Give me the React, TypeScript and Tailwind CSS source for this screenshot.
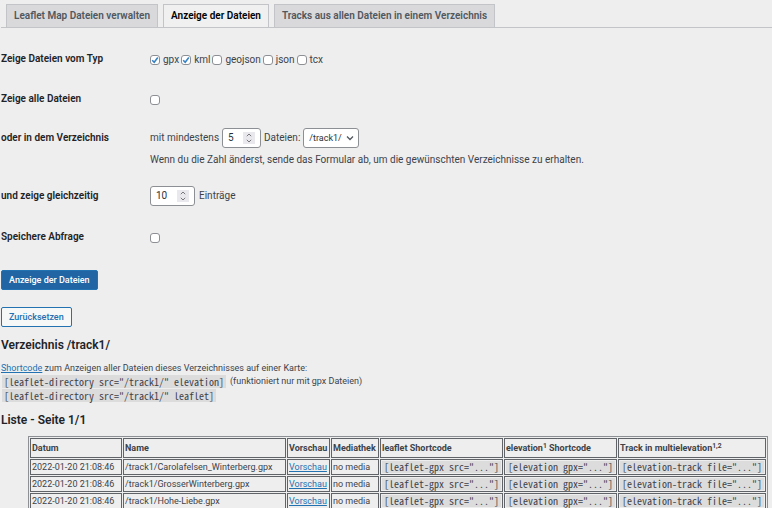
import type { ReactNode } from "react";

const fileTypes = [
  { name: "gpx", checked: true },
  { name: "kml", checked: true },
  { name: "geojson", checked: false },
  { name: "json", checked: false },
  { name: "tcx", checked: false },
];

const files = [
  "/track1/Carolafelsen_Winterberg.gpx",
  "/track1/GrosserWinterberg.gpx",
  "/track1/Hohe-Liebe.gpx",
];

function Checkbox({ id, checked = false }: { id: string; checked?: boolean }) {
  return (
    <span className="grid size-[10px] shrink-0">
      <input
        id={id}
        type="checkbox"
        defaultChecked={checked}
        className="peer col-start-1 row-start-1 size-[10px] appearance-none rounded-[3px] border border-[#8c8f94] bg-white"
      />
      <svg
        viewBox="0 0 10 10"
        className="pointer-events-none invisible col-start-1 row-start-1 size-[10px] peer-checked:visible"
        fill="none"
        stroke="#3582c4"
        strokeWidth="1.6"
        aria-hidden="true"
      >
        <path d="M2.2 5.2 4.2 7.2 7.8 2.6" />
      </svg>
    </span>
  );
}

function NumberBox({ id, value, width }: { id: string; value: number; width: string }) {
  return (
    <span className={`flex h-5 items-center rounded-[3px] border border-[#8c8f94] bg-white px-[5px] ${width}`}>
      <input
        id={id}
        type="number"
        defaultValue={value}
        className="min-w-0 flex-1 appearance-none bg-transparent text-[#2c3338] outline-none [-moz-appearance:textfield] [&::-webkit-inner-spin-button]:appearance-none"
      />
      <svg viewBox="0 0 12 12" className="size-3 shrink-0 bg-[#e9e8ed]" fill="none" stroke="#77777c" aria-hidden="true">
        <path d="M3.8 4.2 6 2l2.2 2.2M3.8 7.8 6 10l2.2-2.2" />
      </svg>
    </span>
  );
}

function Row({ label, htmlFor, height, children }: { label: string; htmlFor?: string; height: string; children: ReactNode }) {
  return (
    <div className={`flex items-start ${height}`}>
      <div className="w-[149px] shrink-0 font-semibold text-[#1d2327]">
        {htmlFor ? <label htmlFor={htmlFor}>{label}</label> : label}
      </div>
      <div className="min-w-0 flex-1">{children}</div>
    </div>
  );
}

function Code({ children }: { children: string }) {
  return (
    <code className="block bg-[#dcdcdd] px-0.5 font-['Noto_Sans_Mono_CJK_SC','DejaVu_Sans_Mono',monospace] text-[10px] whitespace-nowrap">
      {children}
    </code>
  );
}

const tab = "flex h-[23px] items-center border border-b-0 border-[#c3c4c7] px-[7px] font-semibold whitespace-nowrap";
const cell = "border border-[#606367] p-px text-left whitespace-nowrap";

const columns: { title: ReactNode; width: string }[] = [
  { title: "Datum", width: "w-[92px]" },
  { title: "Name", width: "w-[163px]" },
  { title: "Vorschau", width: "w-[43px]" },
  { title: "Mediathek", width: "w-[48px]" },
  { title: "leaflet Shortcode", width: "w-[123px]" },
  { title: <>elevation<sup>1</sup> Shortcode</>, width: "w-[113px]" },
  { title: <>Track in multielevation<sup>1,2</sup></>, width: "w-[147px]" },
];

export default function App() {
  return (
    <div className="h-screen overflow-hidden bg-[#eeeeee] pt-1 pl-px font-[Roboto,'Liberation_Sans',sans-serif] text-[10px] leading-[14px] text-[#3c434a]">
      <nav className="flex gap-[5px] border-b border-[#c3c4c7] pl-[5px]">
        <a href="#verwalten" className={`${tab} bg-[#d9d9db] text-[#50575e]`}>Leaflet Map Dateien verwalten</a>
        <a href="#anzeige" aria-current="page" className={`${tab} -mb-px h-6 bg-[#f0f0f1] text-black`}>Anzeige der Dateien</a>
        <a href="#tracks" className={`${tab} bg-[#d9d9db] text-[#50575e]`}>Tracks aus allen Dateien in einem Verzeichnis</a>
      </nav>

      <form className="pt-6" onSubmit={(e) => e.preventDefault()}>
        <Row label="Zeige Dateien vom Typ" height="h-10">
          <div className="flex items-center gap-0.5 pt-px">
            {fileTypes.map((t) => (
              <span key={t.name} className="flex items-center gap-[3px]">
                <Checkbox id={t.name} checked={t.checked} />
                <label htmlFor={t.name}>{t.name}</label>
              </span>
            ))}
          </div>
        </Row>
        <Row label="Zeige alle Dateien" htmlFor="all" height="h-[39px]">
          <div className="pt-[3px]"><Checkbox id="all" /></div>
        </Row>
        <Row label="oder in dem Verzeichnis" htmlFor="dir" height="h-[58px]">
          <div className="-mt-[3px] flex items-center gap-[3px]">
            <label htmlFor="min">mit mindestens</label>
            <NumberBox id="min" value={5} width="w-[39px]" />
            <label htmlFor="dir">Dateien:</label>
            <span className="grid items-center">
              <select id="dir" className="col-start-1 row-start-1 h-5 w-14 appearance-none rounded-[3px] border border-[#8c8f94] bg-white pl-[5px] text-[9px] text-[#2c3338]">
                <option>/track1/</option>
              </select>
              <svg viewBox="0 0 8 8" className="pointer-events-none col-start-1 row-start-1 mr-[5px] size-2 justify-self-end" fill="none" stroke="#50575e" strokeWidth="1.3" aria-hidden="true">
                <path d="M1 2.5 4 5.5l3-3" />
              </svg>
            </span>
          </div>
          <p className="mt-[5px]">Wenn du die Zahl änderst, sende das Formular ab, um die gewünschten Verzeichnisse zu erhalten.</p>
        </Row>
        <Row label="und zeige gleichzeitig" htmlFor="count" height="h-[41px]">
          <div className="-mt-[3px] flex items-center gap-1">
            <NumberBox id="count" value={10} width="w-[45px]" />
            <span>Einträge</span>
          </div>
        </Row>
        <Row label="Speichere Abfrage" htmlFor="save" height="h-10">
          <div className="pt-[3px]"><Checkbox id="save" /></div>
        </Row>
        <div className="flex flex-col items-start gap-[17px] text-[9px] font-medium">
          <button type="submit" className="h-5 rounded-[2px] border border-[#2271b1] bg-[#2165a5] px-[7px] text-white">Anzeige der Dateien</button>
          <button type="reset" className="h-5 rounded-[2px] border border-[#2271b1] bg-[#f6f7f7] px-[7px] text-[#2271b1]">Zurücksetzen</button>
        </div>
      </form>

      <h2 className="mt-[10px] text-xs leading-4 font-semibold text-[#1d2327]">Verzeichnis /track1/</h2>
      <div className="mt-[9px] text-[9px] leading-[13px]">
        <p><a href="#shortcode" className="text-[#2271b1] underline">Shortcode</a> zum Anzeigen aller Dateien dieses Verzeichnisses auf einer Karte:</p>
        <p className="flex items-center gap-1 pl-px"><Code>{'[leaflet-directory src="/track1/" elevation]'}</Code> (funktioniert nur mit gpx Dateien)</p>
        <p className="mt-px flex pl-px"><Code>{'[leaflet-directory src="/track1/" leaflet]'}</Code></p>
      </div>
      <h2 className="mt-[10px] text-xs leading-4 font-semibold text-[#1d2327]">Liste - Seite 1/1</h2>

      <table className="mt-2 ml-[27px] border-separate border-spacing-px border border-[#8c8f94] text-[9px] leading-[12px]">
        <thead>
          <tr className="h-5 font-semibold">
            {columns.map((c, i) => (
              <th key={i} className={`${cell} ${c.width}`}>{c.title}</th>
            ))}
          </tr>
        </thead>
        <tbody>
          {files.map((f) => (
            <tr key={f}>
              <td className={cell}>2022-01-20 21:08:46</td>
              <td className={cell}>{f}</td>
              <td className={cell}><a href="#vorschau" className="text-[#2271b1] underline">Vorschau</a></td>
              <td className={cell}>no media</td>
              <td className={cell}><Code>{'[leaflet-gpx src="..."]'}</Code></td>
              <td className={cell}><Code>{'[elevation gpx="..."]'}</Code></td>
              <td className={cell}><Code>{'[elevation-track file="..."]'}</Code></td>
            </tr>
          ))}
        </tbody>
      </table>
    </div>
  );
}
